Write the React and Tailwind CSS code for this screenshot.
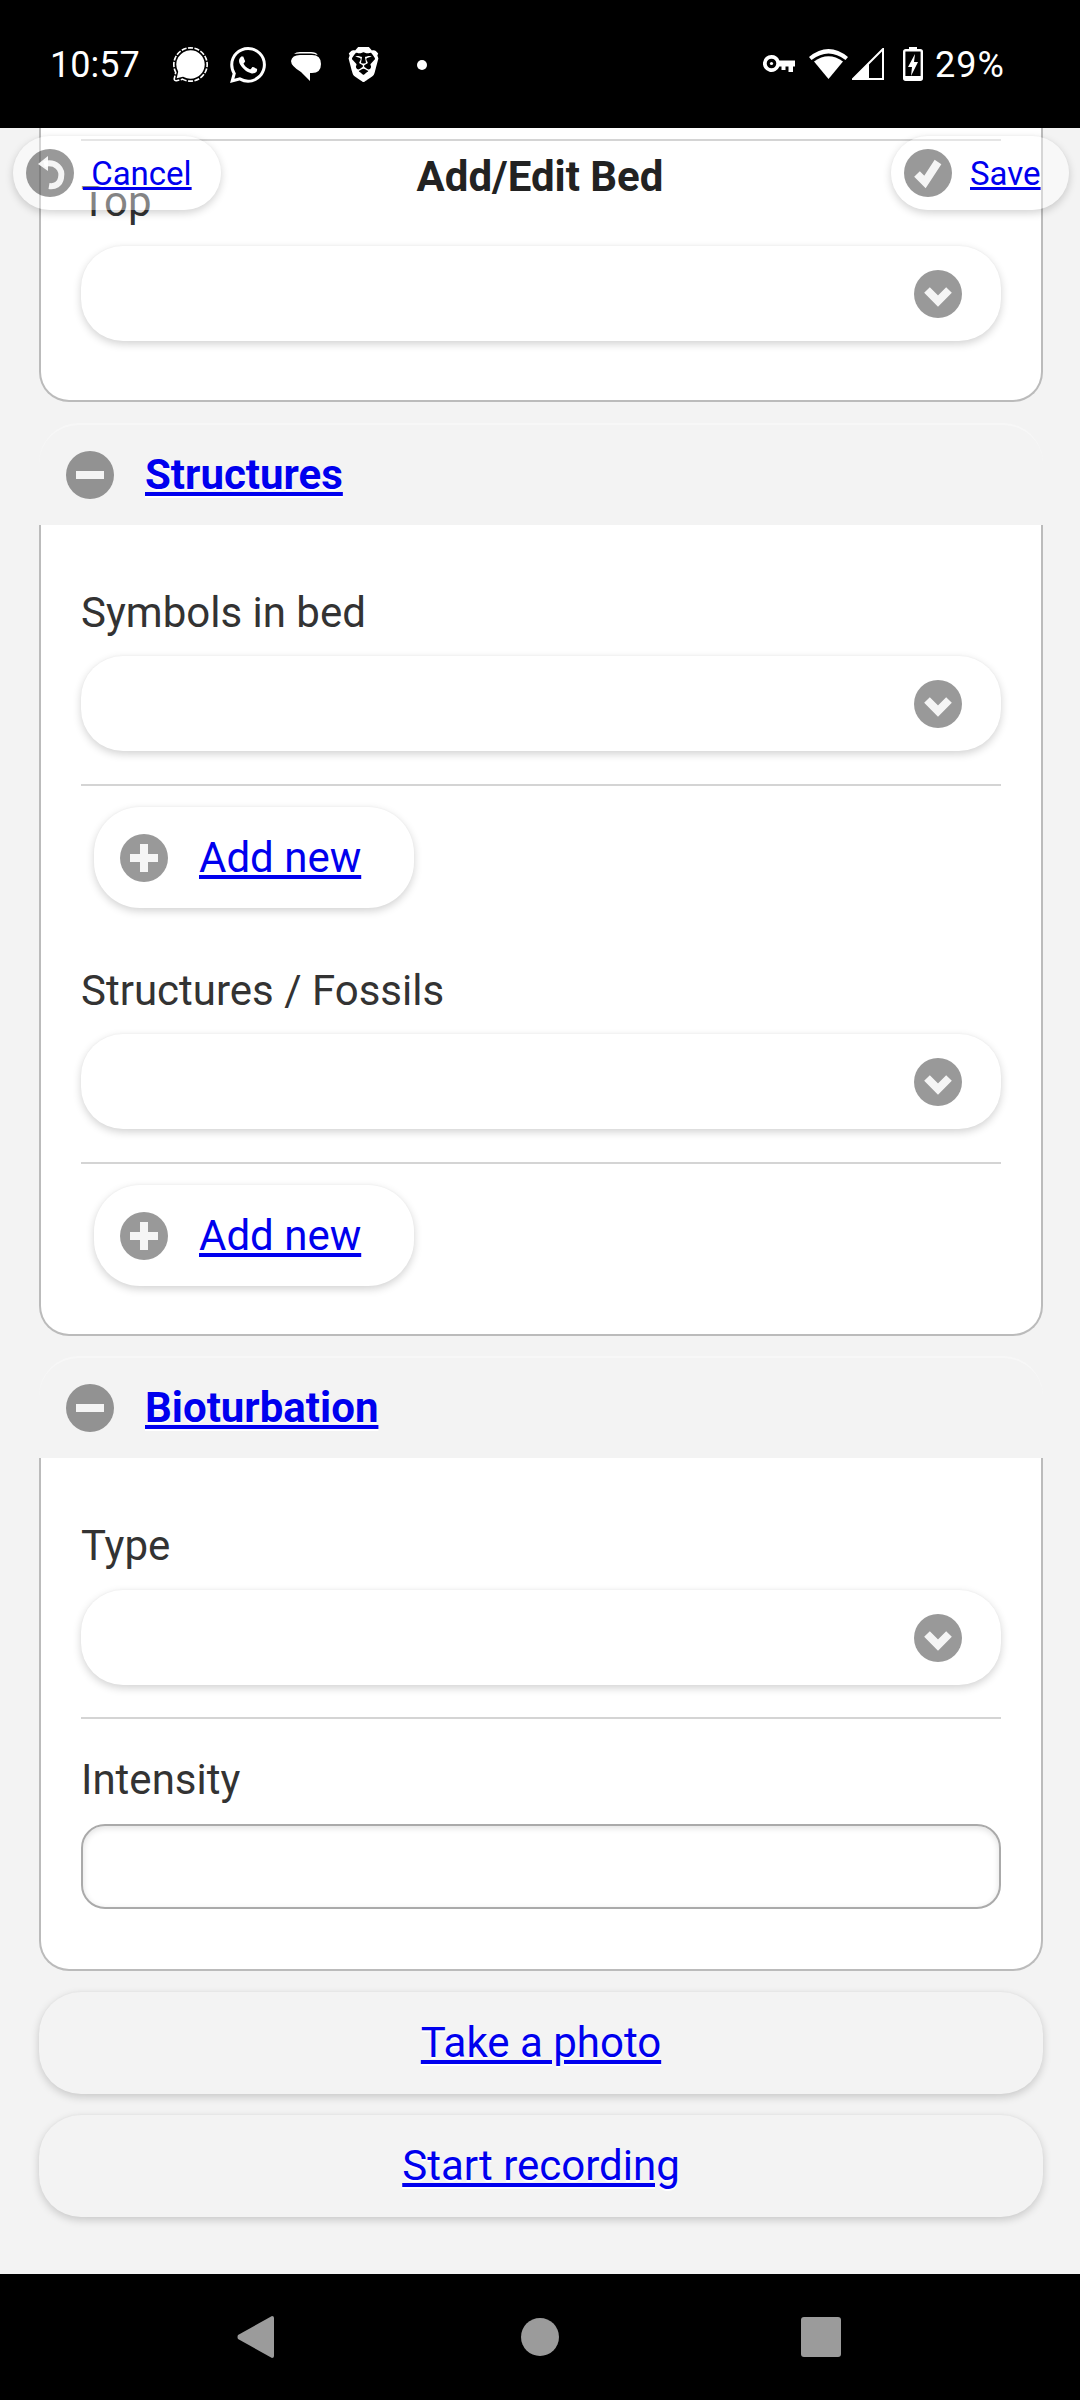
import { SiBrave, SiSignal, SiWhatsapp } from "react-icons/si";

const linkClass = "text-[#0000ee] underline [text-shadow:0_2px_0_#fff]";
const raisedClass = "shadow-[0_3px_8px_rgba(0,0,0,0.18),0_-1px_2px_rgba(0,0,0,0.02)]";

// gray round icon holder, the white glyph goes inside
const Disc = ({ children, className = "" }) => (
    <span className={`flex h-[48px] w-[48px] shrink-0 items-center justify-center rounded-full bg-black/40 ${className}`}>
        <svg viewBox="0 0 48 48" className="h-[48px] w-[48px]" fill="none" stroke="#fff" strokeOpacity="0.9">
            {children}
        </svg>
    </span>
);

const Chevron = () => (
    <Disc>
        <path d="M13 20 L24 31 L35 20" strokeWidth="8" />
    </Disc>
);

const Minus = () => (
    <Disc>
        <path d="M10 24 H38" strokeWidth="8" />
    </Disc>
);

const Plus = () => (
    <Disc>
        <path d="M10 24 H38 M24 10 V38" strokeWidth="8" />
    </Disc>
);

const Check = () => (
    <Disc>
        <path d="M13 25 L21 33 L34 13" strokeWidth="8" />
    </Disc>
);

const Undo = () => (
    <Disc>
        <path d="M18 15 C30 12 37 20 35 29 C34 35 29 38 23 37" strokeWidth="6" />
        <path d="M12 15 L22 7 V22 Z" fill="#fff" stroke="none" fillOpacity="0.9" />
    </Disc>
);

const Label = ({ children, className = "" }) => (
    <div className={`h-[44px] text-[42px] leading-[44px] text-[#333] ${className}`}>{children}</div>
);

const Select = ({ className = "" }) => (
    <div className={`flex h-[95px] items-center justify-end rounded-[42px] bg-white pr-[39px] ${raisedClass} ${className}`}>
        <Chevron />
    </div>
);

const Divider = ({ className = "" }) => <div className={`h-[2px] bg-[#d4d4d4] ${className}`} />;

const AddNew = () => (
    <a className={`ml-[13px] mt-[21px] flex h-[101px] w-[320px] items-center gap-[31px] rounded-[46px] bg-white pl-[26px] ${raisedClass}`}>
        <Plus />
        <span className={`text-[42px] leading-none ${linkClass}`}>Add new</span>
    </a>
);

const SectionHeader = ({ title, className = "" }) => (
    <div className={`flex h-[102px] items-center gap-[31px] rounded-t-[40px] border-t-2 border-[#f7f7f7] pl-[27px] ${className}`}>
        <Minus />
        <a className={`text-[42px] font-bold leading-none ${linkClass}`}>{title}</a>
    </div>
);

const Card = ({ children, className = "" }) => (
    <div className={`rounded-b-[30px] border-x-2 border-b-2 border-[#bbb] bg-white pl-[40px] pr-[40px] ${className}`}>{children}</div>
);

const PageButton = ({ children, className = "" }) => (
    <div className={`flex items-center justify-center rounded-[42px] bg-[#f3f3f3] ${raisedClass} ${className}`}>
        <a className={`text-[42px] leading-none ${linkClass}`}>{children}</a>
    </div>
);

const StatusBar = () => (
    <div className="relative h-[128px] shrink-0 bg-black text-white">
        <span className="absolute left-[50px] top-[44px] text-[36px] leading-[42px]">10:57</span>
        <SiSignal className="absolute left-[173px] top-[47px] h-[35px] w-[35px]" />
        <SiWhatsapp className="absolute left-[230px] top-[47px] h-[36px] w-[36px]" />
        <svg viewBox="0 0 30 30" className="absolute left-[291px] top-[51px] h-[30px] w-[30px]" fill="#fff">
            <path d="M3 3 Q5 1 9 1 H20 Q25 1 27 4 Q24 2.5 20 2.5 H9 Q5 2.5 3 3 Z" />
            <path d="M9 4 H21 Q30 4 30 13 Q30 22 21 22 H19 V30 L10 21 Q0 15 0 10 Q1 4 9 4 Z" />
        </svg>
        <SiBrave className="absolute left-[346px] top-[45px] h-[39px] w-[35px]" />
        <span className="absolute left-[417px] top-[60px] h-[10px] w-[10px] rounded-full bg-white" />

        <svg viewBox="0 0 32 19" className="absolute left-[763px] top-[55px] h-[19px] w-[32px]" fill="#fff">
            <path fillRule="evenodd" d="M8.5 0 A8.5 8.5 0 0 1 16.4 5.5 H32 V11.5 H30 V17 H25.5 V11.5 H22.5 V15 H18.5 V11.5 H16.4 A8.5 8.5 0 1 1 8.5 0 Z M8.5 3.7 A4.8 4.8 0 1 0 8.5 13.3 A4.8 4.8 0 1 0 8.5 3.7 Z" />
            <circle cx="8.5" cy="8.5" r="1.6" />
        </svg>
        <svg viewBox="0 0 39 32" className="absolute left-[809px] top-[47px] h-[32px] w-[39px]" fill="#fff">
            <path d="M0 10 Q19.5 -6 39 10 L36.5 13 Q19.5 0 2.5 13 Z" />
            <path d="M5 14.5 Q19.5 4 34 14.5 L19.5 32 Z" />
        </svg>
        <svg viewBox="0 0 32 32" className="absolute left-[852px] top-[48px] h-[32px] w-[32px]" fill="#fff">
            <path d="M1 31 L31 1 V31 Z" fill="none" stroke="#fff" strokeWidth="2" />
            <path d="M1 31 L17 15 V31 Z" />
        </svg>
        <svg viewBox="0 0 20 34" className="absolute left-[903px] top-[47px] h-[34px] w-[20px]" fill="#fff">
            <path d="M6 0 H14 V3 H6 Z" />
            <rect x="1.2" y="3.2" width="17.6" height="29.6" rx="1.5" fill="none" stroke="#fff" strokeWidth="2.4" />
            <path d="M1 29 H19 V33 H1 Z" />
            <path d="M12 7 L5 20 H9 L8 29 L15 15 H11 Z" />
        </svg>
        <span className="absolute left-[935px] top-[44px] text-[36px] leading-[42px] tracking-[1px]">29%</span>
    </div>
);

const NavBar = () => (
    <div className="flex h-[126px] shrink-0 items-center bg-black">
        <svg viewBox="0 0 38 42" className="ml-[237px] h-[42px] w-[38px]" fill="#9b9b9b">
            <path d="M35 0 Q37 0 37 2 V40 Q37 42 35 42 L1 23 Q0 21 1 19 Z" />
        </svg>
        <span className="ml-[246px] h-[38px] w-[38px] rounded-full bg-[#9b9b9b]" />
        <span className="ml-[242px] h-[40px] w-[40px] rounded-[3px] bg-[#9b9b9b]" />
    </div>
);

const App = () => {
    return (
        <div className="relative flex h-[2400px] w-[1080px] flex-col overflow-hidden bg-[#f3f3f3] font-['Roboto',sans-serif]">
            <StatusBar />

            <main className="min-h-0 flex-1 pl-[39px] pr-[37px]">
                <Card className="pb-[59px] pt-[11px]">
                    <Divider />
                    <Label className="mb-[22px] mt-[39px]">Top</Label>
                    <Select />
                </Card>

                <SectionHeader title="Structures" className="mt-[21px]" />
                <Card className="pb-[48px] pt-[66px]">
                    <Label className="mb-[21px]">Symbols in bed</Label>
                    <Select />
                    <Divider className="mt-[33px]" />
                    <AddNew />
                    <Label className="mb-[21px] mt-[61px]">Structures / Fossils</Label>
                    <Select />
                    <Divider className="mt-[33px]" />
                    <AddNew />
                </Card>

                <SectionHeader title="Bioturbation" className="mt-[20px]" />
                <Card className="pb-[60px] pt-[66px]">
                    <Label className="mb-[22px]">Type</Label>
                    <Select />
                    <Divider className="mt-[32px]" />
                    <Label className="mb-[22px] mt-[39px]">Intensity</Label>
                    <div className="h-[85px] rounded-[24px] border-2 border-[#aaa] bg-white shadow-[inset_0_2px_6px_rgba(0,0,0,0.12)]" />
                </Card>

                <PageButton className="mt-[21px] h-[102px]">Take a photo</PageButton>
                <PageButton className="mt-[21px] h-[102px]">Start recording</PageButton>
            </main>

            <NavBar />

            {/* fixed page header, floats over the scrolled form */}
            <header className="absolute left-0 right-0 top-[128px] flex h-[98px] items-center justify-center">
                <h1 className="text-[42px] font-bold leading-none text-[#222]">Add/Edit Bed</h1>
                <a className={`absolute left-[13px] top-[8px] flex h-[74px] w-[208px] items-center gap-[8px] rounded-[37px] bg-white/40 pl-[13px] ${raisedClass}`}>
                    <Undo />
                    <span className={`ml-[1px] whitespace-pre text-[33px] leading-none ${linkClass}`}> Cancel</span>
                </a>
                <a className={`absolute left-[891px] top-[8px] flex h-[74px] w-[178px] items-center gap-[18px] rounded-[37px] bg-white/40 pl-[13px] ${raisedClass}`}>
                    <Check />
                    <span className={`text-[33px] leading-none ${linkClass}`}>Save</span>
                </a>
            </header>
        </div>
    );
};

export default App;
